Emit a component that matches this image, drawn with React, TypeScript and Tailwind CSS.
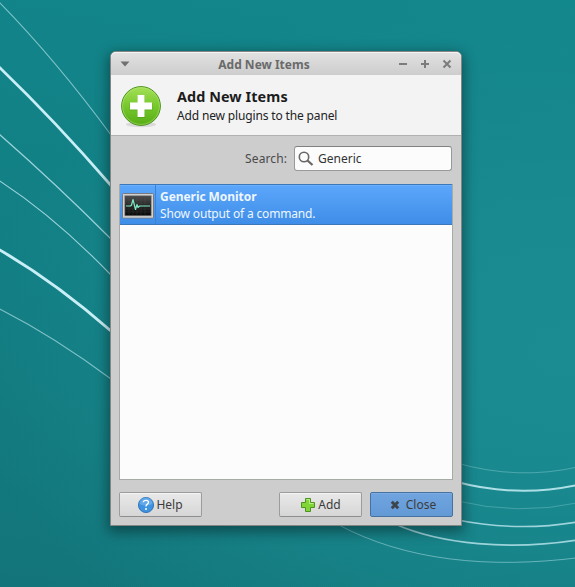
import type { ReactNode } from 'react';

function Wallpaper() {
  return (
    <svg className="absolute inset-0" width="575" height="587" viewBox="0 0 575 587" fill="none">
      <g stroke="#c8eef6">
        <path d="M-1 2Q55 59 111 135" strokeWidth="1.100" opacity=".6" />
        <path d="M-1 67Q55 121 111 185.500" strokeWidth="2.700" />
        <path d="M-1 134Q55 183 111 239" strokeWidth="1.200" opacity=".75" />
        <path d="M-1 180.500Q55 217 111 275" strokeWidth="1.100" opacity=".75" />
        <path d="M-1 249.500Q55 282 111 331" strokeWidth="2.900" />
        <path d="M-1 308.500Q55 337 111 379" strokeWidth="1.100" opacity=".6" />
        <path d="M455 462.500Q518 481 580 466.500" strokeWidth="1" opacity=".3" />
        <path d="M455 481.500Q518 498.500 580 484.500" strokeWidth="2" opacity=".85" />
        <path d="M455 500.500Q518 516 580 502.500" strokeWidth="1" opacity=".25" />
        <path d="M455 519.500Q518 532.500 580 521.500" strokeWidth="1.600" opacity=".75" />
        <path d="M395 524C440 544 510 551 580 539.500" strokeWidth="1.800" opacity=".75" />
        <path d="M337 524C405 561 490 569 580 557.500" strokeWidth="1" opacity=".45" />
      </g>
    </svg>
  );
}

function AddBadge() {
  return (
    <svg width="42" height="42" viewBox="0 0 42 42">
      <defs>
        <linearGradient id="badge" x1="0" y1="0" x2="0" y2="1">
          <stop offset="0" stopColor="#a6e058" />
          <stop offset=".5" stopColor="#76c82c" />
          <stop offset="1" stopColor="#57ac16" />
        </linearGradient>
      </defs>
      <ellipse cx="21" cy="38.500" rx="15" ry="2.700" fill="#000" opacity=".1" />
      <circle cx="21" cy="20" r="19.400" fill="url(#badge)" stroke="#4b9222" />
      <circle cx="21" cy="20" r="18.400" fill="none" stroke="#c1ec82" strokeWidth=".8" opacity=".6" />
      <path d="M17 9.500h8v7.500h7.500v7.500H25V32h-8v-7.500H9.500V17H17z" fill="#3e8a0c" opacity=".35" />
      <path d="M17.500 9h7v7.500H32v7h-7.500V31h-7v-7.500H10v-7h7.500z" fill="#fff" />
    </svg>
  );
}

function MonitorIcon() {
  return (
    <svg width="32" height="26" viewBox="0 0 32 26">
      <defs>
        <linearGradient id="screen" x1="0" y1="0" x2="0" y2="1">
          <stop offset="0" stopColor="#4b4b4b" />
          <stop offset=".5" stopColor="#252525" />
          <stop offset="1" stopColor="#080808" />
        </linearGradient>
      </defs>
      <rect x=".5" y=".5" width="31" height="24.500" rx="1" fill="#b9b9b9" stroke="#777b80" />
      <rect x="1.500" y="1.500" width="29" height="22.500" fill="none" stroke="#d2d2d2" />
      <rect x="3" y="3" width="26" height="19.500" fill="url(#screen)" stroke="#555" strokeWidth=".6" />
      <path d="M4 7h24M4 10h24M4 13h24M4 16h24M4 19h24M7 4v18M11 4v18M15 4v18M19 4v18M23 4v18" stroke="#777" strokeWidth=".4" opacity=".35" />
      <path d="M4 13h4.500l1-1 1.500-5.500 2.500 10 1.500-5 1 3 1.500-1.500H28" fill="none" stroke="#7de8c4" strokeWidth="1.200" strokeLinejoin="round" />
    </svg>
  );
}

function Button({ children, primary }: { children: ReactNode; primary?: boolean }) {
  return (
    <button
      className={
        'flex h-[25px] w-[83px] items-center justify-center rounded-[2px] border text-[#3c3c3c] ' +
        (primary
          ? 'border-[#47719f] bg-linear-to-b from-[#6fa4df] to-[#639ad6] shadow-[inset_0_1px_0_#7bade4]'
          : 'border-[#9c9c9c] border-b-[#8e8e8e] bg-linear-to-b from-[#e9e9e9] to-[#d6d6d6] shadow-[inset_0_1px_0_#f4f4f4]')
      }
    >
      {children}
    </button>
  );
}

export default function App() {
  return (
    <div className="relative h-[587px] w-[575px] overflow-hidden bg-[linear-gradient(10deg,#13757a_0%,#127e83_45%,#12878c_100%)] pt-[51px] pl-[110px] font-['Noto_Sans',sans-serif] text-[12px] leading-[17px]">
      <div className="absolute inset-0 bg-[radial-gradient(ellipse_at_100%_60%,#1a8c92_0%,#1a8c92cc_30%,#1a8c9200_75%)]" />
      <Wallpaper />
      <main className="relative flex h-[475px] w-[352px] flex-col rounded-t-[6px] border border-[#858585] bg-[#cdcdcd] shadow-[0_4px_13px_2px_rgba(0,0,0,0.4)]">
        <header className="relative flex h-[23px] shrink-0 items-center justify-between rounded-t-[5px] bg-linear-to-b from-[#e2e2e2] to-[#cdcdcd] pt-px pr-[8px] pl-[9px] shadow-[inset_0_1px_0_#f4f4f4]">
          <svg width="10" height="6" viewBox="0 0 10 6">
            <path d="M.5.500h9L5 5.500z" fill="#707070" />
          </svg>
          <h1 className="absolute inset-x-0 top-[4px] pr-[44px] text-center font-bold text-[#6a6a6a]">Add New Items</h1>
          <svg width="54" height="10" viewBox="0 0 54 10" stroke="#7c7c7c" strokeWidth="2" className="relative">
            <path d="M0 5h8M22 5h8M26 1v8" />
            <path d="m44.500 1.500 7 7m0-7-7 7" />
          </svg>
        </header>

        <section className="flex h-[61px] shrink-0 border-b border-[#b0b0b0] bg-[#f3f3f3] pt-[11px] pl-[9px] text-[#222]">
          <AddBadge />
          <div className="ml-[15px] pt-px">
            <h2 className="text-[14.4px] leading-[20px] font-bold tracking-[0.08px] text-[#1c1c1c]">Add New Items</h2>
            <p className="leading-[17px] tracking-[-0.15px]">Add new plugins to the panel</p>
          </div>
        </section>

        <label className="mt-[10px] mr-[9px] flex h-[25px] shrink-0 items-center justify-end text-[#4a4a4a]">
          <span className="tracking-[0.1px]">Search:</span>
          <span className="ml-[7px] flex h-[25px] w-[158px] items-center rounded-[3px] border border-[#999] border-t-[#808080] bg-[#fcfcfc] pl-[3px] text-[#333]">
            <svg width="16" height="16" viewBox="0 0 16 16" fill="none" stroke="#686868">
              <circle cx="6" cy="6" r="4.700" strokeWidth="1.600" />
              <path d="m9.500 9.500 5 4.500" strokeWidth="2.300" />
            </svg>
            <span className="ml-[4px]">Generic</span>
          </span>
        </label>

        <div className="mx-[8px] mt-[13px] h-[296px] shrink-0 border border-[#a7aba5] bg-[#fcfcfc]">
          <div className="-mt-px flex h-[41px] items-stretch border-y border-[#3c78b9] bg-linear-to-b from-[#5ca7fb] to-[#3e8de8] text-[#eef6ff] shadow-[inset_0_1px_0_#6bb0fc]">
            <div className="flex w-[36px] items-center border-r border-[#3b83d2] pt-[2px] pl-[2px]">
              <MonitorIcon />
            </div>
            <div className="pt-[3px] pl-[4px]">
              <p className="leading-[17px] font-bold tracking-[-0.06px]">Generic Monitor</p>
              <p className="leading-[17px] tracking-[-0.16px]">Show output of a command.</p>
            </div>
          </div>
        </div>

        <footer className="mx-[8px] mt-[12px] flex gap-[8px]">
          <Button>
            <svg width="16" height="16" viewBox="0 0 16 16">
              <circle cx="8" cy="8" r="7.600" fill="#3e92df" stroke="#2468ad" strokeWidth=".8" />
              <path d="M1.500 7a6.500 6.500 0 0 1 13 0Q8 10 1.500 7" fill="#8bc5fb" opacity=".45" />
              <path d="M5.300 5.300Q5.500 3.300 8 3.300q2.500 0 2.500 2 0 1.200-1.400 2.100-1.100.7-1.100 2.100" fill="none" stroke="#fff" strokeWidth="1.300" />
              <circle cx="8" cy="12" r="1" fill="#fff" />
            </svg>
            <span className="ml-[2px]">Help</span>
          </Button>
          <div className="grow" />
          <Button>
            <svg width="16" height="16" viewBox="0 0 16 16">
              <path d="M5.500 1.500h5v4h4v5h-4v4h-5v-4h-4v-5h4z" fill="#80d636" stroke="#4e9222" strokeLinejoin="round" />
              <path d="M6.500 2.500h3v4h4" fill="none" stroke="#baf085" />
            </svg>
            <span className="ml-[2px]">Add</span>
          </Button>
          <Button primary>
            <svg width="16" height="16" viewBox="0 0 16 16">
              <path d="m4.800 4.800 6.400 6.400m0-6.400-6.400 6.400" stroke="#3d444b" strokeWidth="3" />
            </svg>
            <span className="ml-[3px]">Close</span>
          </Button>
        </footer>
      </main>
    </div>
  );
}
